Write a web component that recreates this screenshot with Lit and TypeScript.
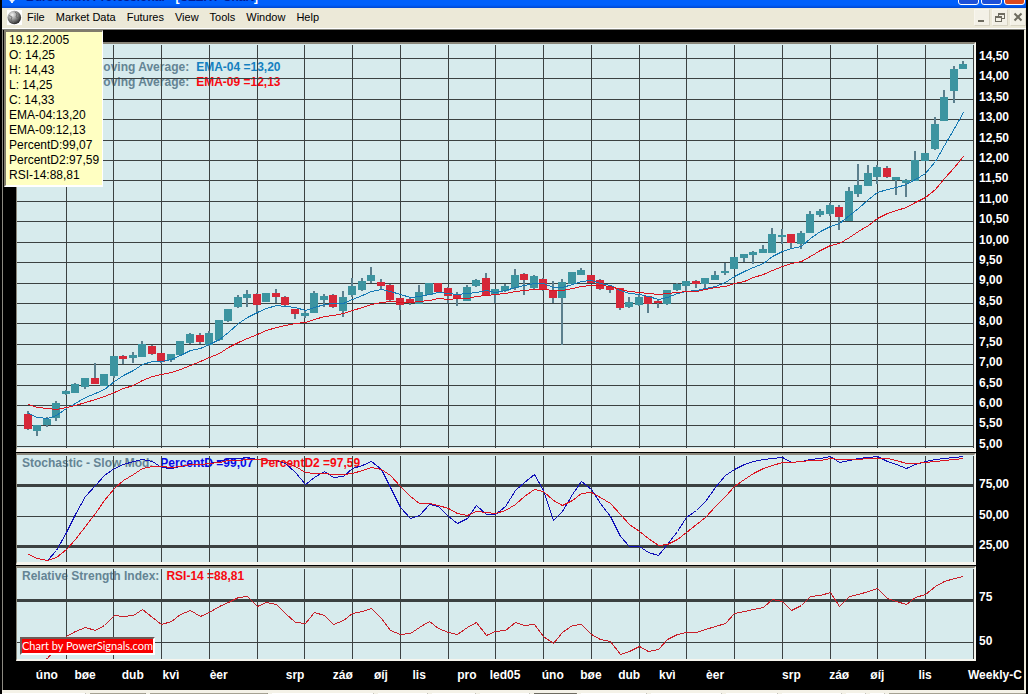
import { LitElement, html, svg, css } from "lit";
import { customElement, property } from "lit/decorators.js";

type Candle = [string, number, number, number, number];

/** Weekly candles: direction, body top, body bottom, wick top, wick bottom. */
const CANDLES: Candle[] = [
  ["r", 414, 429, 411, 430], ["t", 425, 431, 425, 436], ["t", 419, 425, 417, 427], ["t", 403, 418, 401, 421],
  ["t", 391, 394, 390, 395], ["t", 384, 393, 383, 393], ["t", 378, 387, 378, 389], ["r", 378, 384, 363, 384],
  ["t", 374, 386, 374, 386], ["t", 356, 376, 356, 378], ["r", 356, 359, 355, 364], ["t", 355, 358, 352, 363],
  ["t", 344, 357, 341, 357], ["r", 346, 354, 345, 355], ["r", 353, 362, 353, 363], ["t", 354, 360, 354, 362],
  ["t", 341, 355, 341, 355], ["t", 334, 343, 333, 344], ["r", 335, 342, 333, 344], ["t", 333, 345, 331, 346],
  ["t", 320, 340, 320, 341], ["t", 309, 321, 309, 322], ["t", 297, 307, 295, 308], ["t", 294, 298, 290, 307],
  ["r", 294, 305, 293, 313], ["t", 293, 302, 293, 302], ["r", 293, 297, 289, 303], ["r", 297, 305, 296, 307],
  ["r", 309, 314, 309, 319], ["t", 313, 316, 310, 318], ["t", 293, 313, 291, 313], ["t", 296, 300, 294, 307],
  ["r", 295, 307, 294, 308], ["t", 297, 311, 291, 317], ["t", 286, 295, 278, 297], ["t", 281, 290, 278, 291],
  ["t", 275, 281, 267, 283], ["r", 282, 286, 279, 289], ["r", 285, 300, 284, 301], ["r", 298, 305, 298, 310],
  ["r", 299, 303, 297, 305], ["t", 292, 304, 285, 304], ["t", 283, 295, 283, 295], ["r", 283, 292, 283, 292],
  ["r", 288, 296, 287, 303], ["r", 294, 299, 292, 306], ["t", 287, 301, 285, 301], ["t", 280, 286, 279, 287],
  ["r", 278, 295, 273, 295], ["t", 289, 295, 289, 303], ["t", 286, 291, 284, 292], ["t", 275, 288, 269, 290],
  ["r", 274, 280, 273, 295], ["t", 276, 288, 275, 290], ["r", 279, 289, 278, 291], ["r", 290, 298, 281, 303],
  ["t", 282, 298, 279, 345], ["t", 272, 284, 272, 284], ["t", 270, 275, 268, 275], ["r", 275, 283, 275, 283],
  ["r", 280, 289, 279, 290], ["r", 286, 290, 286, 293], ["r", 288, 308, 288, 310], ["t", 302, 307, 297, 308],
  ["t", 297, 305, 294, 306], ["r", 296, 304, 296, 313], ["r", 301, 303, 300, 308], ["t", 290, 304, 290, 305],
  ["t", 284, 290, 283, 291], ["t", 281, 286, 281, 292], ["r", 281, 284, 280, 288], ["t", 278, 284, 278, 289],
  ["t", 275, 280, 271, 280], ["t", 271, 273, 263, 275], ["t", 257, 269, 257, 269], ["t", 254, 258, 254, 262],
  ["t", 252, 255, 251, 264], ["t", 249, 253, 245, 253], ["t", 234, 253, 228, 253], ["t", 235, 237, 229, 244],
  ["r", 234, 243, 234, 249], ["t", 233, 244, 231, 249], ["t", 214, 233, 211, 233], ["t", 211, 215, 209, 217],
  ["t", 205, 214, 203, 216], ["r", 207, 217, 205, 230], ["t", 191, 221, 187, 221], ["t", 185, 194, 164, 197],
  ["t", 173, 186, 165, 186], ["t", 167, 177, 165, 184], ["r", 168, 177, 166, 178], ["t", 177, 180, 177, 195],
  ["t", 180, 183, 179, 197], ["t", 160, 181, 151, 181], ["t", 153, 161, 153, 161], ["t", 124, 149, 117, 150],
  ["t", 97, 121, 90, 121], ["t", 69, 91, 66, 103], ["t", 64, 69, 61, 69],
];

const EMA4 = [
  413, 417, 418, 415, 408, 403, 397, 393, 389, 381,
  375, 370, 364, 361, 361, 359, 355, 350, 348, 344,
  339, 332, 323, 317, 312, 308, 305, 306, 307, 310,
  307, 304, 303, 303, 299, 295, 291, 289, 291, 294,
  297, 296, 294, 292, 293, 294, 293, 292, 290, 292,
  290, 287, 285, 283, 283, 287, 287, 284, 281, 280,
  283, 285, 290, 293, 294, 296, 299, 297, 293, 291,
  290, 288, 286, 282, 276, 271, 267, 263, 256, 251,
  248, 246, 238, 231, 226, 223, 215, 208, 199, 192,
  189, 187, 184, 179, 173, 161, 145, 128, 112,
];

const EMA9 = [
  404, 407, 408, 409, 407, 405, 402, 399, 396, 392,
  388, 385, 380, 376, 374, 372, 369, 365, 361, 357,
  353, 347, 342, 338, 334, 330, 327, 325, 323, 322,
  319, 316, 315, 313, 310, 307, 304, 302, 301, 302,
  302, 301, 300, 298, 299, 298, 298, 296, 295, 294,
  293, 291, 290, 289, 289, 290, 290, 288, 286, 285,
  285, 286, 289, 291, 292, 293, 294, 293, 292, 291,
  291, 289, 287, 286, 283, 281, 277, 274, 270, 266,
  263, 261, 256, 250, 245, 243, 237, 231, 225, 218,
  213, 210, 207, 202, 197, 189, 178, 167, 156,
];

const PERCENT_D = [
  554, 558, 560, 550, 532, 514, 496, 485, 475, 468,
  464, 461, 459, 461, 467, 468, 466, 464, 464, 463,
  461, 458, 458, 457, 459, 460, 460, 463, 472, 484,
  477, 471, 477, 476, 468, 465, 461, 469, 487, 507,
  518, 515, 504, 506, 516, 523, 518, 505, 514, 514,
  506, 490, 482, 474, 490, 520, 511, 494, 481, 489,
  503, 516, 536, 546, 546, 552, 555, 544, 531, 517,
  510, 501, 487, 475, 469, 464, 461, 459, 458, 457,
  462, 461, 459, 458, 456, 462, 460, 458, 457, 456,
  461, 464, 468, 464, 461, 459, 458, 457, 456,
];

const PERCENT_D2 = [
  554, 558, 560, 557, 549, 539, 526, 513, 500, 488,
  480, 474, 468, 466, 466, 467, 466, 464, 464, 463,
  462, 460, 460, 459, 459, 460, 460, 462, 466, 472,
  473, 473, 474, 474, 473, 470, 467, 469, 475, 486,
  496, 503, 503, 505, 508, 513, 515, 511, 512, 513,
  510, 504, 496, 489, 491, 500, 505, 500, 493, 492,
  497, 503, 514, 524, 531, 538, 545, 544, 539, 532,
  524, 517, 506, 496, 486, 479, 473, 468, 465, 462,
  462, 461, 460, 460, 458, 459, 459, 459, 458, 458,
  458, 460, 463, 463, 462, 461, 460, 459, 458,
];

const RSI = [
  664, 663, 658, 647, 636, 631, 627, 630, 625, 615,
  616, 615, 609, 617, 624, 621, 614, 610, 616, 612,
  606, 602, 597, 596, 606, 602, 604, 613, 622, 623,
  612, 615, 624, 620, 613, 611, 608, 618, 630, 634,
  633, 627, 621, 628, 632, 634, 627, 622, 635, 631,
  630, 622, 625, 624, 636, 643, 632, 625, 624, 634,
  639, 641, 654, 651, 646, 651, 649, 639, 634, 632,
  632, 629, 626, 623, 613, 611, 609, 607, 599, 601,
  610, 605, 596, 595, 592, 606, 596, 594, 591, 588,
  598, 601, 604, 597, 594, 586, 581, 578, 576,
];

const MONTHS: [string, number][] = [
  ["úno", 2], ["bøe", 6], ["dub", 11], ["kvì", 15], ["èer", 20], ["srp", 28], ["záø", 33],
  ["øíj", 37], ["lis", 41], ["pro", 46], ["led05", 50], ["úno", 55], ["bøe", 59], ["dub", 63],
  ["kvì", 67], ["èer", 72], ["srp", 80], ["záø", 85], ["øíj", 89], ["lis", 94],
];

const LEFT = 17;
const WIDTH = 957;
const weekX = (i: number) => Math.floor(28.2 + i * 9.546);
const MONTH_LINES = Array.from({ length: 20 }, (_, k) => Math.floor(66.2 + k * 47.74));
const PRICE_LINES = Array.from({ length: 20 }, (_, k) => Math.floor(58.4 + k * 20.42));

@customElement("chart-plot")
export class ChartPlot extends LitElement {
  @property({ type: Number }) top = 0;
  @property({ type: Number }) size = 100;
  @property({ attribute: false }) thin: number[] = [];
  @property({ attribute: false }) thick: number[] = [];
  @property({ attribute: false }) candles: Candle[] = [];
  @property({ attribute: false }) series: { tone: string; values: number[] }[] = [];

  static styles = css`
    :host { display: block; }
    svg { display: block; width: 100%; shape-rendering: crispEdges; }
    .grid { fill: #3b4141; }
    .wick { fill: #5b7f8d; }
    .t { fill: #3c94a0; }
    .r { fill: #d62839; }
    polyline { fill: none; stroke-width: 1; vector-effect: non-scaling-stroke; }
    .sky { stroke: #1478b4; }
    .red { stroke: #dc1420; }
    .crimson { stroke: #c8202a; }
    .blue { stroke: #1010b8; }
  `;

  render() {
    const bottom = this.top + this.size;
    return html`
      <svg height=${this.size} viewBox="${LEFT} ${this.top} ${WIDTH} ${this.size}" preserveAspectRatio="none" aria-hidden="true">
        ${MONTH_LINES.map((x) => svg`<rect class="grid" x=${x} y=${this.top + 1} width="1" height=${bottom - this.top - 1} />`)}
        ${this.thin.map((y) => svg`<rect class="grid" x=${LEFT} y=${y} width=${WIDTH} height="1" />`)}
        ${this.thick.map((y) => svg`<rect class="grid" x=${LEFT} y=${y} width=${WIDTH} height="3" />`)}
        ${this.candles.map(([dir, bt, bb, wt, wb], i) => svg`
          <rect class="wick" x=${weekX(i) - 1} y=${wt} width="2" height=${wb - wt} />
          <rect class=${dir} x=${weekX(i) - 4} y=${bt} width="8" height=${bb - bt} />`)}
        ${this.series.map((s) => svg`
          <polyline class=${s.tone} points=${s.values.map((y, i) => `${weekX(i) + 0.5},${y + 0.5}`).join(" ")} />`)}
      </svg>
    `;
  }
}

@customElement("app-root")
export class AppRoot extends LitElement {
  static styles = css`
    :host {
      display: block;
      background: #000;
      font-family: "Liberation Sans", Arial, sans-serif;
      font-size: 12px;
      color: #000;
    }
    .window { display: flex; flex-direction: column; min-height: 100vh; margin: 0 2px; background: #ece9d8; overflow: hidden; }

    .title {
      height: 8px;
      display: flex;
      justify-content: space-between;
      overflow: hidden;
      background: linear-gradient(#0060fc 5px, #0046d0);
    }
    .title h1 {
      margin: -11px 0 0 8px;
      font-size: 12px;
      line-height: 16px;
      font-weight: bold;
      color: #001a94;
      white-space: nowrap;
    }
    .title h1 span { color: #fff; }
    .title svg { display: block; flex: none; width: 12px; height: 8px; margin-left: 4px; }
    .caption { display: flex; gap: 2px; margin-left: auto; padding-right: 1px; }
    .caption button {
      width: 21px; height: 21px; margin-top: -16px; padding: 0;
      border: 1px solid #fff; border-radius: 3px;
      background: #1c50d8;
    }
    .caption .quit { background: #dc4a20; }

    .menubar { display: flex; align-items: center; height: 18px; padding-bottom: 2px; border-bottom: 1px solid #fff; }
    .logo { display: block; width: 15px; height: 15px; margin: 0 0 0 5px; background: #fff; }
    .menu { display: flex; flex: 1; gap: 1px; }
    .menu button {
      border: 0; background: none; padding: 0 5px; margin: 0;
      font: 11px/18px "Liberation Sans", Arial, sans-serif; color: #000;
    }
    .mdi { display: flex; gap: 2px; }
    .mdi button {
      display: block; width: 16px; height: 17px; padding: 0;
      border: 1px solid #f8f6ee; border-right-color: #d8d4c4; border-bottom-color: #d8d4c4;
      background: #f3f1e7;
    }
    .mdi svg { display: block; width: 14px; height: 14px; fill: none; stroke: #6e6c60; stroke-width: 2; shape-rendering: crispEdges; }
    .mdi .cross { shape-rendering: auto; }

    .workspace {
      position: relative;
      flex: 1;
      background: #000;
      border-top: 1px solid #808078;
      border-left: 1px solid #8c8a82;
      border-right: 2px solid #ece9d8;
      padding-top: 12px;
    }
    .row { display: grid; grid-template-columns: minmax(0, 1fr) 48px; padding-left: 13px; }
    .row + .row { margin-top: 1px; }
    .panel {
      display: grid;
      background: #d7ebed;
      border-style: solid;
      border-width: 2px 2px 3px 1px;
      border-color: #8a867a #f6f5ee #f6f5ee #8a867a;
    }
    .row:first-of-type .panel { border-bottom-width: 4px; }
    .row:last-of-type .panel { border-bottom-width: 2px; }
    .panel > * { grid-area: 1 / 1; min-width: 0; }
    .legend { font-weight: bold; line-height: 15px; padding: 1px 0 0 5px; color: #648494; white-space: nowrap; align-self: start; }
    .legend p { margin: 0; display: flex; gap: 7px; }
    .legend.price { padding-top: 16px; }
    .sky { color: #1480c0; }
    .red { color: #f80810; }
    .blue { color: #0808e8; }
    .badge {
      align-self: end;
      justify-self: start;
      z-index: 1;
      margin: 0 0 4px 3px;
      border: 2px solid #fff;
      border-top-color: #6c5c58;
      border-left-color: #6c5c58;
      background: #f80000;
      color: #fff;
      font-family: Lato, "Liberation Sans", sans-serif;
      font-size: 11px;
      line-height: 14px;
      text-decoration: none;
      white-space: nowrap;
    }

    .axis {
      display: flex; flex-direction: column; justify-content: space-between;
      margin: 0; padding: 24px 0 13px 3px; list-style: none;
      font-weight: bold; line-height: 14px; color: #fff;
    }
    .axis.price { padding: 7px 0 1px 3px; }

    .dates { display: flex; padding: 7px 0 0 20px; font-weight: bold; line-height: 14px; color: #fff; }
    .weeks { flex: 1; display: grid; grid-template-columns: repeat(99, minmax(0, 1fr)); margin: 0; padding: 0; list-style: none; }
    .weeks li { grid-row: 1; justify-self: center; }
    .period { width: 56px; white-space: nowrap; }

    .tip {
      position: absolute;
      top: 0;
      left: 1px;
      z-index: 2;
      margin: 0;
      padding: 1px 0 2px 3px;
      width: 93px;
      border: 2px solid #fff;
      border-top-color: #807c6c;
      border-left-color: #807c6c;
      border-right-width: 1px;
      background: #ffffc2;
      list-style: none;
      line-height: 15px;
      white-space: nowrap;
    }

    .status { display: flex; gap: 4px; height: 1px; padding-top: 3px; background: #f4f2e8; }
    .status span { box-sizing: border-box; border-top: 1px solid #fff; border-right: 1px solid #8a877a; }
    .status .sunk { border-top-color: #a5a294; }
    .status .dark { border-top-color: #6e6c62; }
  `;

  private readonly prices = Array.from({ length: 20 }, (_, k) => (14.5 - k / 2).toFixed(2).replace(".", ","));
  private readonly readout = [
    "19.12.2005", "O: 14,25", "H: 14,43", "L: 14,25", "C: 14,33",
    "EMA-04:13,20", "EMA-09:12,13", "PercentD:99,07", "PercentD2:97,59", "RSI-14:88,81",
  ];
  private readonly status: [number, string][] = [
    [84, ""], [56, "sunk"], [119, "sunk"], [102, ""], [50, ""], [44, ""], [49, ""],
    [43, "dark"], [66, ""], [71, ""], [52, ""], [60, ""], [19, ""], [14, ""], [138, "sunk"],
  ];

  private axis(labels: string[], kind = "") {
    return html`<ul class="axis ${kind}">${labels.map((l) => html`<li>${l}</li>`)}</ul>`;
  }

  render() {
    return html`
      <div class="window">
        <header class="title">
          <svg viewBox="0 0 12 8" aria-hidden="true"><path d="M3 0h6L7 2v1H5V2z" fill="#e8eefc" /></svg>
          <h1>Bursomarx Professional - <span>[</span>CEZRT Chart<span>]</span></h1>
          <div class="caption">
            <button type="button" aria-label="Minimize"></button>
            <button type="button" aria-label="Maximize"></button>
            <button type="button" class="quit" aria-label="Close"></button>
          </div>
        </header>

        <nav class="menubar">
          <svg class="logo" viewBox="0 0 15 15" aria-hidden="true">
            <defs>
              <radialGradient id="ball" cx="0.35" cy="0.3" r="0.75">
                <stop offset="0" stop-color="#f4f4f4" />
                <stop offset="0.4" stop-color="#a4a4a4" />
                <stop offset="1" stop-color="#202020" />
              </radialGradient>
            </defs>
            <circle cx="7.3" cy="7.5" r="6.8" fill="url(#ball)" />
            <path d="M2 5.5l3 1.5-1 3 3 3M8 2l2 2-1 3 3 1" fill="none" stroke="#6a6a6a" stroke-width="0.8" />
          </svg>
          <div class="menu">
            ${["File", "Market Data", "Futures", "View", "Tools", "Window", "Help"].map((m) => html`<button type="button">${m}</button>`)}
          </div>
          <div class="mdi">
            <button type="button" aria-label="Minimize chart"><svg viewBox="0 0 14 14"><path d="M3 11h6" /></svg></button>
            <button type="button" aria-label="Restore chart">
              <svg viewBox="0 0 14 14"><path d="M2 7h7M5 4h7" /><path stroke-width="1" d="M2.5 7v4.500h6V7M5.500 4v2M8.500 8.500h3V4" /></svg>
            </button>
            <button type="button" aria-label="Close chart"><svg class="cross" viewBox="0 0 14 14"><path d="M3.500 3.500l7 7M10.500 3.500l-7 7" /></svg></button>
          </div>
        </nav>

        <main class="workspace">
          <section class="row">
            <div class="panel">
              <div class="legend price">
                <p><span>Exponential Moving Average:</span><span class="sky">EMA-04 =13,20</span></p>
                <p><span>Exponential Moving Average:</span><span class="red">EMA-09 =12,13</span></p>
              </div>
              <chart-plot
                .top=${44} .size=${404} .thin=${PRICE_LINES} .candles=${CANDLES}
                .series=${[{ tone: "sky", values: EMA4 }, { tone: "red", values: EMA9 }]}
              ></chart-plot>
            </div>
            ${this.axis(this.prices, "price")}
          </section>

          <section class="row">
            <div class="panel">
              <div class="legend">
                <p><span>Stochastic - Slow Mod:</span><span class="blue">PercentD =99,07</span><span class="red">PercentD2 =97,59</span></p>
              </div>
              <chart-plot
                .top=${455} .size=${107} .thin=${[516]} .thick=${[484, 545]}
                .series=${[{ tone: "blue", values: PERCENT_D }, { tone: "red", values: PERCENT_D2 }]}
              ></chart-plot>
            </div>
            ${this.axis(["75,00", "50,00", "25,00"])}
          </section>

          <section class="row">
            <div class="panel">
              <div class="legend">
                <p><span>Relative Strength Index:</span><span class="red">RSI-14 =88,81</span></p>
              </div>
              <chart-plot
                .top=${568} .size=${91} .thin=${[642]} .thick=${[599]}
                .series=${[{ tone: "crimson", values: RSI }]}
              ></chart-plot>
              <a class="badge" href="#powersignals">Chart by PowerSignals.com</a>
            </div>
            ${this.axis(["75", "50"])}
          </section>

          <div class="dates">
            <ol class="weeks">
              ${MONTHS.map(([name, week]) => html`<li style="grid-column:${week + 1}">${name}</li>`)}
            </ol>
            <span class="period">Weekly-C</span>
          </div>

          <ul class="tip">${this.readout.map((l) => html`<li>${l}</li>`)}</ul>
        </main>

        <footer class="status">
          ${this.status.map(([w, kind]) => html`<span class=${kind} style="flex:${w} 1 0"></span>`)}
        </footer>
      </div>
    `;
  }
}
